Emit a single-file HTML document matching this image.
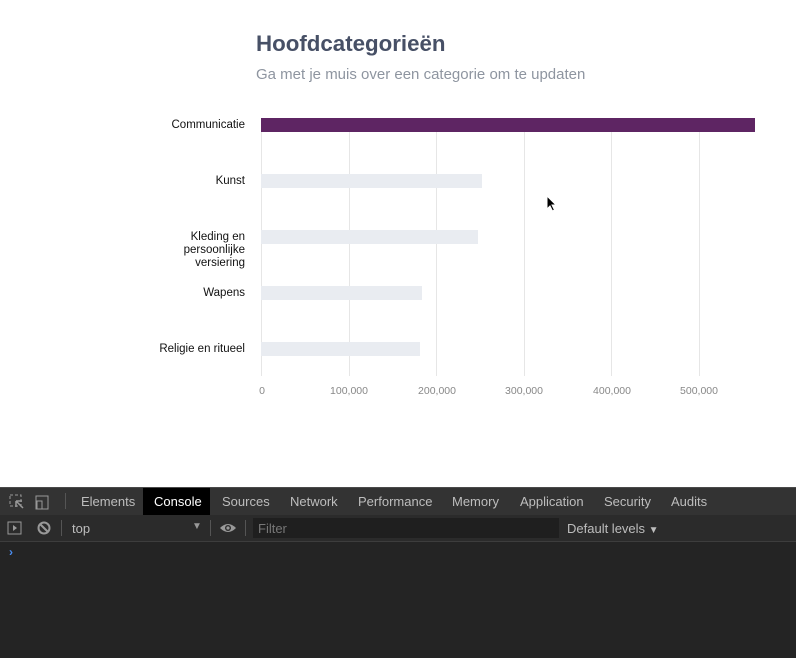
<!DOCTYPE html>
<html><head><style>
body{margin:0;width:796px;height:658px;overflow:hidden;background:#fff;font-family:"Liberation Sans",sans-serif;position:relative}
.a{position:absolute}
h1{position:absolute;left:256px;top:31px;margin:0;font-size:22.3px;font-weight:bold;color:#475066}
.sub{left:256px;top:66px;font-size:15px;color:#8e95a0}
.lbl{font-size:11.5px;color:#111;text-align:right;right:551px;line-height:13px}
.grid{width:1px;background:#e6e6e6;top:132px;height:244px}
.bar{left:261px;height:14px;background:#e9ecf1}
.ax{top:385px;font-size:10.5px;color:#888;transform:translateX(-50%)}
.dt{left:0;top:487px;width:796px;height:171px;background:#242424}
.tabs{top:487px;left:0;width:796px;height:27px;background:#333;border-top:1px solid #4a4a4a;border-bottom:1px solid #3d3d3d}
.tab{top:494px;font-size:13px;color:#bdbdbd}
.tb{top:515px;left:0;width:796px;height:26px;background:#2b2b2b;border-bottom:1px solid #3d3d3d}
</style></head><body>
<h1>Hoofdcategorieën</h1>
<div class="a sub">Ga met je muis over een categorie om te updaten</div>
<div class="a grid" style="left:261px"></div>
<div class="a grid" style="left:349px"></div>
<div class="a grid" style="left:436px"></div>
<div class="a grid" style="left:524px"></div>
<div class="a grid" style="left:611px"></div>
<div class="a grid" style="left:699px"></div>
<div class="a bar" style="top:118px;width:494px;background:#5e2563"></div>
<div class="a bar" style="top:174px;width:221px"></div>
<div class="a bar" style="top:230px;width:217px"></div>
<div class="a bar" style="top:286px;width:161px"></div>
<div class="a bar" style="top:342px;width:159px"></div>
<div class="a lbl" style="top:119px">Communicatie</div>
<div class="a lbl" style="top:175px">Kunst</div>
<div class="a lbl" style="top:231px">Kleding en<br>persoonlijke<br>versiering</div>
<div class="a lbl" style="top:287px">Wapens</div>
<div class="a lbl" style="top:343px">Religie en ritueel</div>
<div class="a ax" style="left:262px">0</div>
<div class="a ax" style="left:349px">100,000</div>
<div class="a ax" style="left:437px">200,000</div>
<div class="a ax" style="left:524px">300,000</div>
<div class="a ax" style="left:612px">400,000</div>
<div class="a ax" style="left:699px">500,000</div>
<svg class="a" style="left:546px;top:195px" width="12" height="18" viewBox="0 0 12 18"><path d="M1 1 L1 14 L4 11 L6.5 16 L8.5 15 L6 10 L10 10 Z" fill="#000" stroke="#fff" stroke-width="1"/></svg>
<div class="a dt"></div>
<div class="a tabs"></div>
<div class="a" style="left:143px;top:488px;width:67px;height:27px;background:#000"></div>
<svg class="a" style="left:8px;top:493px" width="48" height="18"><rect x="2" y="2" width="11" height="11" fill="none" stroke="#999" stroke-dasharray="3,2"/><path d="M8 8 L15 15 M8 8 L8 14 M8 8 L14 8" stroke="#999" stroke-width="1.5"/><rect x="28" y="3" width="12" height="13" fill="none" stroke="#999"/><rect x="29" y="8" width="5" height="8" fill="#333" stroke="#999"/></svg>
<div class="a" style="left:65px;top:493px;width:1px;height:16px;background:#555"></div>
<div class="a tab" style="left:81px">Elements</div>
<div class="a tab" style="left:154px;color:#fff">Console</div>
<div class="a tab" style="left:222px">Sources</div>
<div class="a tab" style="left:290px">Network</div>
<div class="a tab" style="left:358px">Performance</div>
<div class="a tab" style="left:452px">Memory</div>
<div class="a tab" style="left:520px">Application</div>
<div class="a tab" style="left:604px">Security</div>
<div class="a tab" style="left:671px">Audits</div>
<div class="a tb"></div>
<svg class="a" style="left:7px;top:520px" width="48" height="17"><rect x="1" y="2" width="13" height="12" fill="none" stroke="#999"/><path d="M6 5 L10 8 L6 11Z" fill="#999"/><circle cx="37" cy="8" r="5.5" fill="none" stroke="#999" stroke-width="2"/><path d="M33 4 L41 12" stroke="#999" stroke-width="2"/></svg>
<div class="a" style="left:61px;top:520px;width:1px;height:16px;background:#555"></div>
<div class="a" style="left:72px;top:521px;font-size:13px;color:#bdbdbd">top</div>
<div class="a" style="left:192px;top:521px;font-size:10px;color:#999">▼</div>
<div class="a" style="left:210px;top:520px;width:1px;height:16px;background:#555"></div>
<svg class="a" style="left:219px;top:521px" width="18" height="14"><path d="M1 7 Q9 -1 17 7 Q9 15 1 7Z" fill="#999"/><circle cx="9" cy="7" r="3" fill="#2b2b2b"/><circle cx="9" cy="7" r="1.6" fill="#999"/></svg>
<div class="a" style="left:245px;top:520px;width:1px;height:16px;background:#555"></div>
<div class="a" style="left:253px;top:518px;width:306px;height:20px;background:#1f1f1f"></div>
<div class="a" style="left:258px;top:521px;font-size:13px;color:#777">Filter</div>
<div class="a" style="left:567px;top:521px;font-size:13px;color:#bdbdbd">Default levels <span style="font-size:10px">▼</span></div>
<div class="a" style="left:9px;top:545px;font-size:12px;color:#4b8ef0;font-weight:bold">›</div>
</body></html>
